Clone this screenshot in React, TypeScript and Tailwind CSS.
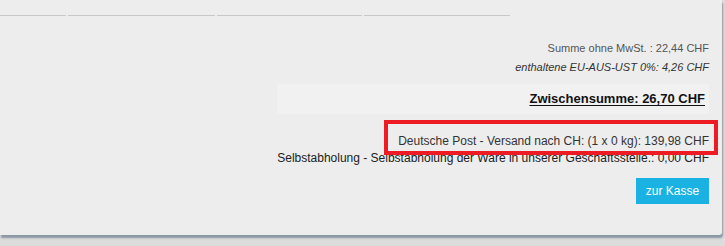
import React from 'react';

const HEADER_COLS = [66, 147, 145, 146];

export default function App() {
  return (
    <div className="h-[246px] w-[725px] overflow-hidden bg-[#dcdcdc] font-['Liberation_Sans',Arial,sans-serif]">
      <div className="flex h-[235px] w-[722px] flex-col rounded-br-[3px] bg-[#ededed] pr-[13px] pt-[15px] shadow-[1px_3px_2px_#8a97a4]">
        {/* table header borders */}
        <div className="flex gap-[2px]">
          {HEADER_COLS.map((w, i) => (
            <div key={i} className="h-px bg-[#c8c8c8]" style={{ width: w }} />
          ))}
        </div>

        <div className="ml-auto flex w-[432px] flex-col items-end">
          <p className="mt-[26px] text-[11px] leading-[13px] text-[#555]">Summe ohne MwSt. : 22,44 CHF</p>
          <p className="mt-[6px] text-[11px] italic leading-[13px] text-[#333]">enthaltene EU-AUS-UST 0%: 4,26 CHF</p>

          <div className="mt-[10px] flex h-[30px] w-full items-center justify-end bg-[#f1f1f1] pr-[4px]">
            <span className="text-[13px] font-bold text-[#111] underline underline-offset-2">Zwischensumme: 26,70 CHF</span>
          </div>

          <p className="relative z-10 mt-[20px] text-[12px] leading-[14px] text-[#333]">
            Deutsche Post - Versand nach CH: (1 x 0 kg): 139,98 CHF
            <span className="pointer-events-none absolute -bottom-[7px] -left-[14px] -right-[9px] -top-[14px] border-4 border-[#ed1c24]" />
          </p>
          <p className="mt-[3px] text-[12px] leading-[14px] text-[#222]">
            Selbstabholung - Selbstabholung der Ware in unserer Geschäftsstelle.: 0,00 CHF
          </p>

          <button className="mt-[13px] h-[26px] w-[73px] bg-[#1ab2e3] text-[12px] text-white">zur Kasse</button>
        </div>
      </div>
    </div>
  );
}
